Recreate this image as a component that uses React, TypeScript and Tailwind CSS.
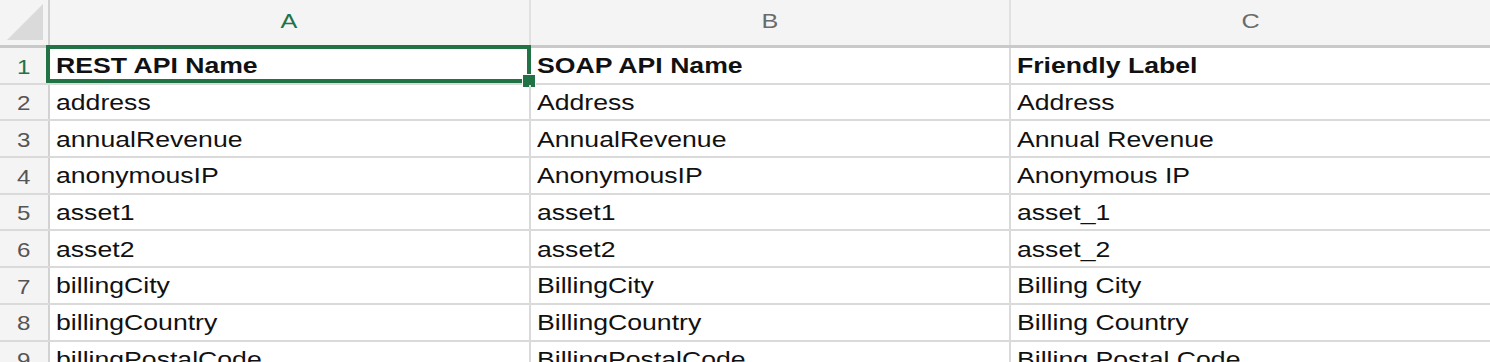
const columns = ['A', 'B', 'C'];

const rows: string[][] = [
  ['REST API Name', 'SOAP API Name', 'Friendly Label'],
  ['address', 'Address', 'Address'],
  ['annualRevenue', 'AnnualRevenue', 'Annual Revenue'],
  ['anonymousIP', 'AnonymousIP', 'Anonymous IP'],
  ['asset1', 'asset1', 'asset_1'],
  ['asset2', 'asset2', 'asset_2'],
  ['billingCity', 'BillingCity', 'Billing City'],
  ['billingCountry', 'BillingCountry', 'Billing Country'],
  ['billingPostalCode', 'BillingPostalCode', 'Billing Postal Code'],
];

const colWidths = ['w-[481px]', 'w-[480px]', 'w-[479px]'];

function CornerCell() {
  return (
    <div className="w-[50px] h-full shrink-0 bg-[#f4f4f4] border-r-2 border-[#d2d2d2] flex items-end justify-end p-[5px]">
      <svg width="36" height="36" viewBox="0 0 36 36">
        <polygon points="36,0 36,36 0,36" fill="#dadada" />
      </svg>
    </div>
  );
}

export default function App() {
  return (
    <div
      className="w-[1490px] h-[362px] overflow-hidden bg-white text-[#111]"
      style={{ fontFamily: '"Liberation Sans", Arial, sans-serif' }}
    >
      {/* column header */}
      <div className="flex h-[48px] bg-[#f4f4f4] border-b-[3px] border-[#c9c9c9]">
        <CornerCell />
        {columns.map((c, i) => (
          <div
            key={c}
            className={`${colWidths[i]} shrink-0 flex items-center justify-center pb-[4px] ${
              i < 2 ? 'border-r-2 border-[#e1e1e1]' : ''
            }`}
          >
            <span
              className={`inline-block scale-x-[1.2] text-[21px] ${
                i === 0 ? 'text-[#217346]' : 'text-[#6b6b6b]'
              }`}
            >
              {c}
            </span>
          </div>
        ))}
      </div>

      {rows.map((row, r) => (
        <div key={r} className="flex h-[36.7px] border-b-2 border-[#dadada]">
          <div className="w-[50px] shrink-0 bg-[#f4f4f4] border-r-2 border-[#d2d2d2] flex items-center justify-center pt-[2px]">
            <span
              className={`inline-block scale-x-[1.15] text-[21px] ${
                r === 0 ? 'text-[#217346]' : 'text-[#555]'
              }`}
            >
              {r + 1}
            </span>
          </div>
          {row.map((cell, i) => (
            <div
              key={i}
              className={`${colWidths[i]} shrink-0 relative flex items-center pl-[6px] pt-[2px] ${
                i < 2 ? 'border-r-2 border-[#dadada]' : ''
              }`}
            >
              <span
                className={`inline-block origin-left scale-x-[1.21] whitespace-nowrap text-[22px] leading-none ${
                  r === 0 ? 'font-bold' : ''
                }`}
              >
                {cell}
              </span>
              {r === 0 && i === 0 && (
                <div className="absolute -top-[3px] -left-[4px] -right-[2px] bottom-[0px] border-[4px] border-[#217346]">
                  <div className="absolute -right-[9px] -bottom-[9px] w-[14px] h-[14px] bg-[#217346] border border-white" />
                </div>
              )}
            </div>
          ))}
        </div>
      ))}
    </div>
  );
}
